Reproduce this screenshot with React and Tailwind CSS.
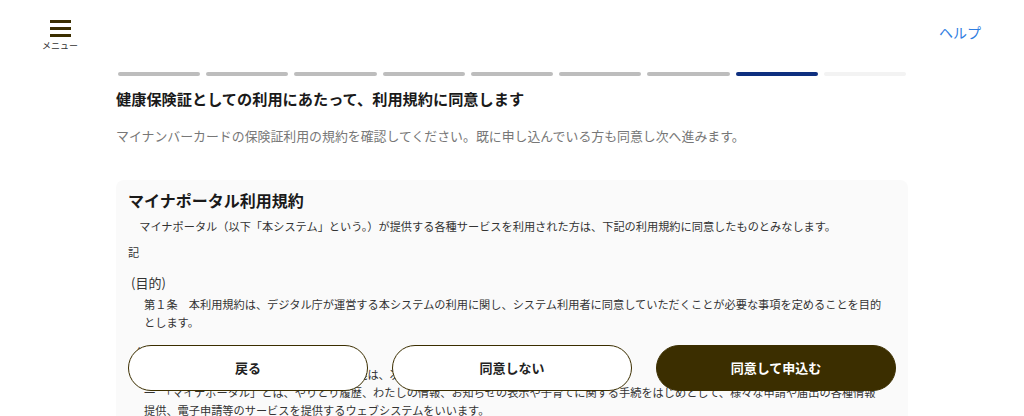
import React from "react";

const font = { fontFamily: '"Noto Sans CJK JP", "Noto Sans", sans-serif' };

export default function App() {
  const steps = [0, 0, 0, 0, 0, 0, 0, 1, 2];
  return (
    <div
      className="relative w-full h-[416px] overflow-hidden bg-white text-[#333]"
      style={font}
    >
      {/* Header */}
      <header className="flex h-[64px] items-start justify-between">
        <button className="ml-[38px] mt-[20px] flex w-[44px] flex-col items-center">
          <span className="flex w-[21px] flex-col gap-[4px]">
            <span className="block h-[3px] w-full bg-[#3b2e00]" />
            <span className="block h-[3px] w-full bg-[#3b2e00]" />
            <span className="block h-[3px] w-full bg-[#3b2e00]" />
          </span>
          <span className="mt-[3px] text-[9px] leading-[12px] text-[#333]">
            メニュー
          </span>
        </button>
        <a className="mr-[43px] mt-[22px] text-[14px] leading-[20px] text-[#2f7de1]">
          ヘルプ
        </a>
      </header>

      <main className="mx-auto w-[792px]">
        {/* Progress */}
        <div className="mt-[8px] flex gap-[6px] px-[2px]">
          {steps.map((s, i) => (
            <div
              key={i}
              className={
                "h-[4px] flex-1 rounded-full " +
                (s === 0 ? "bg-[#bdbdbd]" : s === 1 ? "bg-[#0e2f7f]" : "bg-[#f3f3f3]")
              }
            />
          ))}
        </div>

        <h1 className="mt-[11px] text-[15.2px] font-bold leading-[22px] text-[#1a1a1a]">
          健康保険証としての利用にあたって、利用規約に同意します
        </h1>
        <p className="mt-[17px] text-[12.9px] leading-[20px] text-[#777]">
          マイナンバーカードの保険証利用の規約を確認してください。既に申し込んでいる方も同意し次へ進みます。
        </p>

        {/* Card */}
        <section className="mt-[34px] rounded-[8px] bg-[#fafafa] px-[12px] pt-[8px] pb-[40px]">
          <h2 className="text-[16px] font-bold leading-[24px] text-[#1a1a1a]">
            マイナポータル利用規約
          </h2>
          <p className="mt-[5px] whitespace-pre text-[11.2px] leading-[18px]">
            {"\u3000マイナポータル（以下「本システム」という。）が提供する各種サービスを利用された方は、下記の利用規約に同意したものとみなします。"}
          </p>
          <p className="mt-[8px] text-[11.2px] leading-[18px]">記</p>

          <h3 className="mt-[12px] pl-[3px] text-[13px] leading-[20px]">(目的)</h3>
          <p className="mt-[2px] whitespace-nowrap pl-[16px] text-[11.2px] leading-[18px]">
            第１条　本利用規約は、デジタル庁が運営する本システムの利用に関し、システム利用者に同意していただくことが必要な事項を定めることを目的
            <br />
            とします。
          </p>

          <h3 className="mt-[12px] pl-[8px] text-[13px] leading-[20px]">(定義)</h3>
          <p className="mt-[2px] whitespace-nowrap pl-[16px] text-[11.2px] leading-[18px]">
            第２条　本規約において使用する用語の定義は、次の各号に定めるところによります。
          </p>
          <p className="whitespace-nowrap pl-[16px] text-[11.2px] leading-[18px]">
            一　「マイナポータル」とは、やりとり履歴、わたしの情報、お知らせの表示や子育てに関する手続をはじめとして、様々な申請や届出の各種情報
            <br />
            提供、電子申請等のサービスを提供するウェブシステムをいいます。
          </p>
        </section>
      </main>

      {/* Floating buttons */}
      <div className="absolute bottom-[25px] left-0 right-0 flex justify-center gap-[24px]">
        <button className="h-[46px] w-[240px] rounded-full border border-[#3b2e00] bg-white text-[13px] font-bold text-[#222]">
          戻る
        </button>
        <button className="h-[46px] w-[240px] rounded-full border border-[#3b2e00] bg-white text-[13px] font-bold text-[#222]">
          同意しない
        </button>
        <button className="h-[46px] w-[240px] rounded-full border border-[#3b2e00] bg-[#3b2e00] text-[13px] font-bold text-white">
          同意して申込む
        </button>
      </div>
    </div>
  );
}
